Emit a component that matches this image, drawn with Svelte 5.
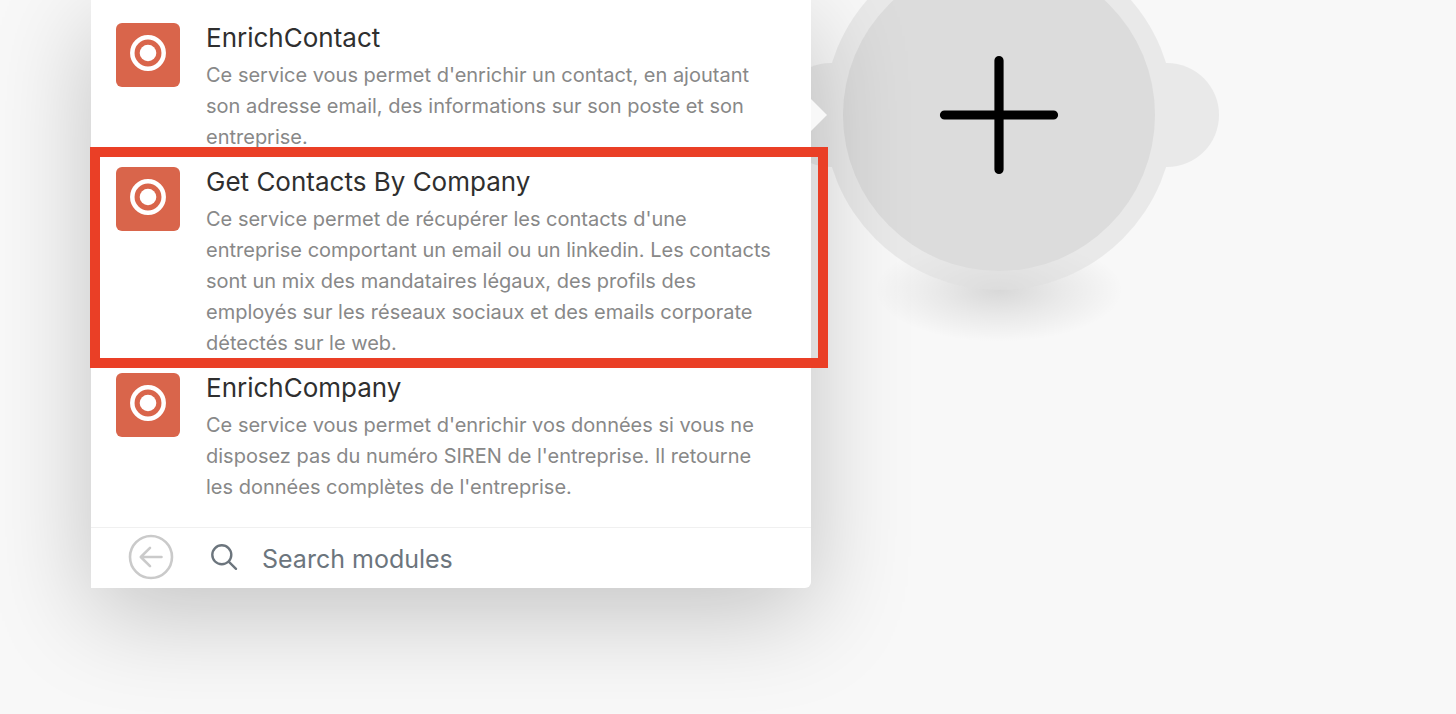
<script>
  const modules = [
    {
      name: 'EnrichContact',
      text: "Ce service vous permet d'enrichir un contact, en ajoutant son adresse email, des informations sur son poste et son entreprise."
    },
    {
      name: 'Get Contacts By Company',
      text: "Ce service permet de récupérer les contacts d'une entreprise comportant un email ou un linkedin. Les contacts sont un mix des mandataires légaux, des profils des employés sur les réseaux sociaux et des emails corporate détectés sur le web.",
      marked: true
    },
    {
      name: 'EnrichCompany',
      text: "Ce service vous permet d'enrichir vos données si vous ne disposez pas du numéro SIREN de l'entreprise. Il retourne les données complètes de l'entreprise."
    }
  ];
  let query = $state('');
</script>

<main class="canvas">
  <button class="node" aria-label="Add module">
    <svg width="440" height="420" viewBox="0 0 440 420" aria-hidden="true">
      <defs>
        <radialGradient id="ground">
          <stop offset="0" stop-color="#000" stop-opacity="0.13" />
          <stop offset="0.5" stop-color="#000" stop-opacity="0.06" />
          <stop offset="1" stop-color="#000" stop-opacity="0" />
        </radialGradient>
      </defs>
      <ellipse cx="220" cy="364" rx="124" ry="52" fill="url(#ground)" />
      <g fill="#e0e0e0" opacity="0.6">
        <circle cx="51.5" cy="189" r="52" />
        <circle cx="388" cy="189" r="52" />
        <circle cx="220" cy="189" r="175" />
      </g>
      <circle cx="220" cy="189" r="156" fill="#dcdcdc" />
      <path d="M220 134.500v109M165.500 189h109" stroke="#000" stroke-width="9.200" stroke-linecap="round" />
    </svg>
  </button>

  <section class="panel">
    <ul class="modules">
      {#each modules as item}
        <li class:marked={item.marked}>
          <button class="module">
            <svg class="logo" viewBox="0 0 64 64" aria-hidden="true">
              <rect width="64" height="64" rx="6" fill="#d9654b" />
              <circle cx="32" cy="30" r="15.700" fill="none" stroke="#fff" stroke-width="4.500" />
              <circle cx="32" cy="30" r="8.300" fill="#fff" />
            </svg>
            <span class="copy">
              <span class="name">{item.name}</span>
              <span class="text">{item.text}</span>
            </span>
          </button>
        </li>
      {/each}
    </ul>
    <footer>
      <button class="back" aria-label="Back">
        <svg width="46" height="46" viewBox="0 0 46 46" fill="none" stroke="#cacaca" aria-hidden="true">
          <circle cx="23" cy="23" r="21" stroke-width="2.600" />
          <path d="M33.500 23H13M22 13.800L12.800 23l9.200 9.200" stroke-width="2.600" stroke-linecap="round" stroke-linejoin="round" />
        </svg>
      </button>
      <label class="search">
        <svg width="28" height="28" viewBox="0 0 28 28" fill="none" stroke="#6c757d" stroke-width="2.400" stroke-linecap="round" aria-hidden="true">
          <circle cx="11.800" cy="11.800" r="9.500" />
          <path d="M18.700 18.700L26 25.800" />
        </svg>
        <input type="text" placeholder="Search modules" aria-label="Search modules" bind:value={query} />
      </label>
    </footer>
  </section>
</main>

<style>
  :global(body) {
    margin: 0;
    background: #f8f8f8;
  }
  .canvas {
    position: relative;
    min-height: 100vh;
    overflow: hidden;
    box-sizing: border-box;
    padding-left: 91px;
    background: #f8f8f8;
    font-family: Inter, "Liberation Sans", sans-serif;
  }
  button {
    border: 0;
    padding: 0;
    background: none;
    color: inherit;
    font: inherit;
    text-align: left;
    cursor: pointer;
  }
  svg {
    display: block;
    flex: none;
  }
  .node {
    position: absolute;
    left: 779px;
    top: -74px;
  }
  .panel {
    position: relative;
    box-sizing: border-box;
    width: 100%;
    max-width: 720px;
    padding-top: 23px;
    background: #fff;
    border-bottom-right-radius: 6px;
    box-shadow: 0 25px 100px rgba(0, 0, 0, 0.22);
  }
  .panel::after {
    content: "";
    position: absolute;
    left: 100%;
    top: 99px;
    border: 16px solid transparent;
    border-left-color: #f8f8f8;
    border-right-width: 0;
  }
  .modules {
    margin: 0;
    padding: 0 0 10px;
    list-style: none;
  }
  li {
    position: relative;
  }
  .marked::after {
    content: "";
    position: absolute;
    z-index: 1;
    inset: -20px -17px 5px -1px;
    border: 10px solid #ea3f26;
    pointer-events: none;
  }
  .module {
    display: flex;
    gap: 26px;
    align-items: flex-start;
    width: 100%;
    padding: 0 36px 14px 25px;
  }
  .logo {
    width: 64px;
    height: 64px;
  }
  .name,
  .text {
    display: block;
  }
  .name {
    padding-bottom: 7px;
    color: #2f2f2f;
    font-size: 26px;
    line-height: 30px;
  }
  .text {
    color: #888;
    font-size: 20px;
    line-height: 31px;
  }
  footer {
    display: flex;
    align-items: center;
    gap: 36px;
    height: 58px;
    padding: 0 24px 2px 37px;
    border-top: 1px solid #f0f0f0;
  }
  .search {
    display: flex;
    flex: 1;
    align-items: center;
    gap: 24px;
  }
  input {
    flex: 1;
    min-width: 0;
    border: 0;
    padding: 4px 0 0;
    outline: 0;
    background: none;
    color: #6c757d;
    font: 25px/32px Inter, "Liberation Sans", sans-serif;
  }
  input::placeholder {
    color: #6c757d;
    opacity: 1;
  }
</style>
